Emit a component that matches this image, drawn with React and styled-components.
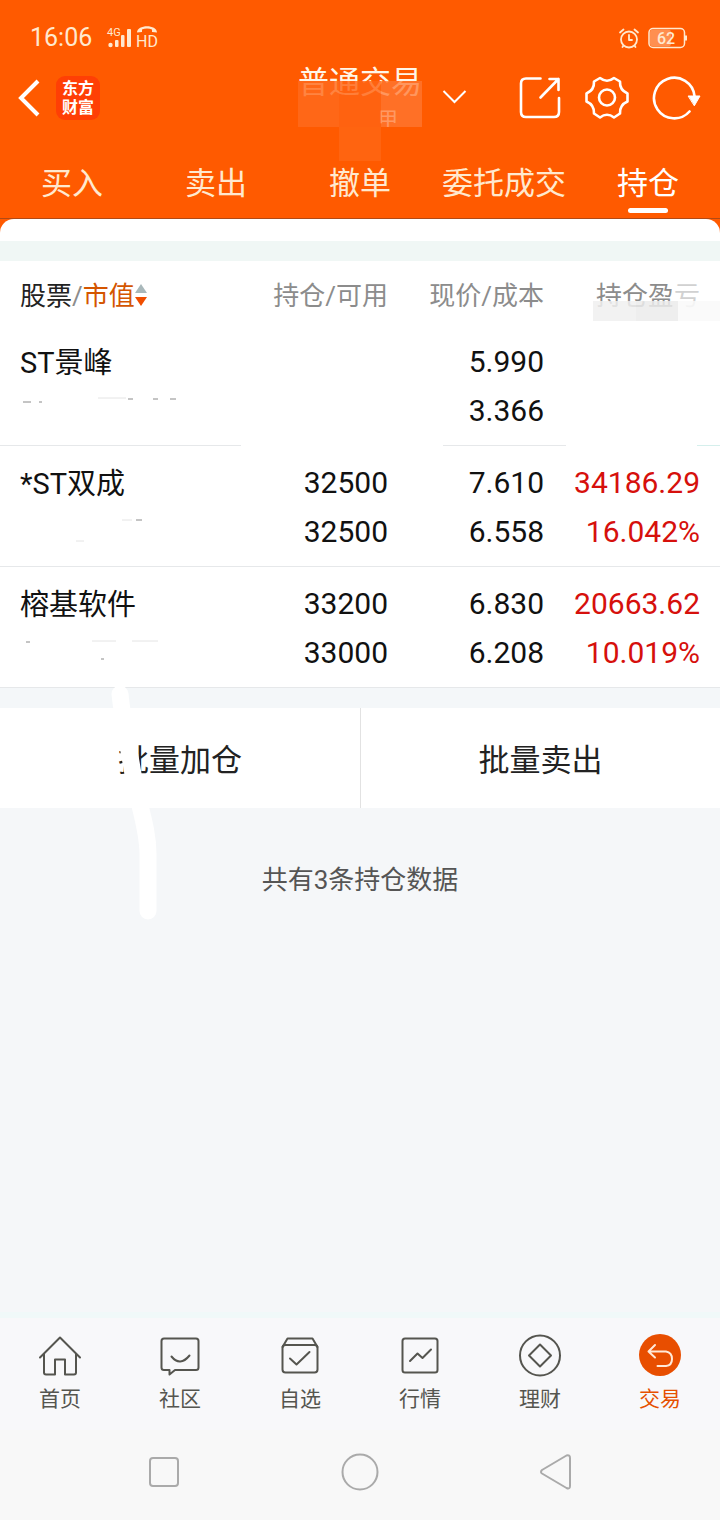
import React from "react";
import styled, { createGlobalStyle } from "styled-components";

const ORANGE = "#ff5a00";
const CREAM = "#ffe9cf";

const GlobalStyle = createGlobalStyle`
  *, *::before, *::after { box-sizing: border-box; }
  body {
    margin: 0;
    background: #f5f7f9;
    font-family: Roboto, "Noto Sans CJK SC", sans-serif;
    color: #111;
  }
  button {
    margin: 0;
    padding: 0;
    border: 0;
    background: none;
    font: inherit;
    color: inherit;
    cursor: pointer;
  }
  svg { display: block; flex: none; }
`;

const Page = styled.div`
  min-height: 100vh;
  display: flex;
  flex-direction: column;
`;

const Header = styled.header`
  background: ${ORANGE};
  color: #fff;
  border-bottom: 1px solid #b04a16;
`;

const StatusBar = styled.div`
  display: flex;
  align-items: center;
  height: 60px;
  padding: 16px 32px 0 30px;
  color: ${CREAM};
`;

const Clock = styled.span`
  font-size: 25px;
  line-height: 30px;
  margin-right: 14px;
`;

const StatusRight = styled.div`
  margin-left: auto;
  display: flex;
  align-items: center;
  gap: 8px;
`;

const TitleBar = styled.div`
  display: grid;
  grid-template-columns: 1fr auto 1fr;
  align-items: center;
  height: 76px;
  padding: 0 18px;
`;

const BarLeft = styled.div`
  display: flex;
  align-items: center;
  gap: 16px;
`;

const Logo = styled.a`
  width: 44px;
  height: 44px;
  padding: 3px 0;
  border-radius: 9px;
  background: #ff3f05;
  color: #fff;
  font-weight: 700;
  font-size: 16px;
  line-height: 19px;
  text-align: center;
  text-decoration: none;
`;

const TitleBlock = styled.div`
  position: relative;
`;

const Title = styled.h1`
  margin: 0;
  font-weight: 400;
  font-size: 31px;
  line-height: 40px;
  color: #fff6e8;
`;

const Account = styled.div`
  margin-top: 4px;
  padding-right: 24px;
  text-align: right;
  font-size: 20px;
  line-height: 26px;
`;

const Mosaic = styled.div`
  position: absolute;
  left: 0;
  right: 0;
  top: 18px;
  display: grid;
  grid-template-columns: repeat(3, 1fr);
`;

const Tile = styled.span`
  height: ${(p) => p.$h}px;
  background: ${(p) => p.$c};
`;

const BarRight = styled.div`
  display: flex;
  align-items: center;
  padding-left: 20px;
`;

const IconButton = styled.button`
  display: flex;
  margin-left: ${(p) => (p.$push ? "auto" : p.$gap || 0)};
`;

const Tabs = styled.nav`
  display: grid;
  grid-template-columns: repeat(5, 1fr);
  height: 82px;
  padding-top: 24px;
`;

const Tab = styled.button`
  display: flex;
  flex-direction: column;
  align-items: center;
  font-size: 31px;
  line-height: 48px;
  white-space: nowrap;
  color: ${(p) => (p.$active ? "#fff" : CREAM)};
  &::after {
    content: "";
    width: 40px;
    height: 5px;
    border-radius: 3px;
    background: ${(p) => (p.$active ? "#fff" : "transparent")};
  }
`;

const SheetTop = styled.div`
  background: ${ORANGE};
  &::before {
    content: "";
    display: block;
    height: 22px;
    border-radius: 14px 14px 0 0;
    background: #fff;
  }
`;

const Strip = styled.div`
  height: 20px;
  background: ${(p) => p.$c};
`;

const Holdings = styled.table`
  width: 100%;
  table-layout: fixed;
  border-collapse: collapse;
  background: #fff;
`;

const Col = styled.col`
  width: ${(p) => p.$w};
`;

const HeadCell = styled.th`
  position: relative;
  height: 64px;
  padding: 5px ${(p) => (p.$last ? 20 : 0)}px 0 ${(p) => (p.$first ? 20 : 0)}px;
  text-align: ${(p) => (p.$first ? "left" : "right")};
  font-weight: 400;
  font-size: 26px;
  line-height: 38px;
  white-space: nowrap;
  color: ${(p) => (p.$first ? "#222" : "#8c8c8c")};
`;

const SortButton = styled.button`
  display: inline-flex;
  align-items: center;
  color: #d45500;
`;

const Slash = styled.span`
  color: #8c8c8c;
`;

const Smear = styled.div`
  position: absolute;
  top: 40px;
  right: 0;
  width: 127px;
  display: grid;
  grid-template-columns: 43px 42px 1fr;
`;

const Fade = styled.span`
  position: absolute;
  top: 14px;
  right: 12px;
  width: 36px;
  height: 36px;
  background: rgba(255, 255, 255, 0.6);
`;

const solid = "linear-gradient(#e6e8ea, #e6e8ea)";
const broken =
  "linear-gradient(to right, #e6e8ea 241px, transparent 241px 443px, #e6e8ea 443px 566px, transparent 566px calc(100% - 23px), #d5efec calc(100% - 23px))";

const Row = styled.tr`
  height: 121px;
  background: ${(p) => (p.$broken ? broken : solid)} bottom / 100% 1px no-repeat;
`;

const Cell = styled.td`
  padding: 12px ${(p) => (p.$last ? 20 : 0)}px 11px ${(p) => (p.$first ? 20 : 0)}px;
  text-align: ${(p) => (p.$first ? "left" : "right")};
  font-size: ${(p) => (p.$first ? 29 : 30)}px;
  line-height: ${(p) => (p.$first ? 53 : 49)}px;
  color: ${(p) => (p.$gain ? "#d6100c" : "#111")};
`;

const Line = styled.div`
  height: 49px;
`;

const Batch = styled.div`
  position: relative;
  display: grid;
  grid-template-columns: 1fr 1fr;
  background: #fff;
`;

const BatchButton = styled.button`
  height: 100px;
  padding-bottom: 2px;
  font-size: 31px;
  color: #222;
  & + & {
    border-left: 1px solid #e2e2e2;
  }
`;

const Stroke = styled.svg`
  position: absolute;
  left: 108px;
  top: -24px;
  pointer-events: none;
`;

const Summary = styled.p`
  margin: 52px 0 0;
  text-align: center;
  font-size: 26px;
  line-height: 40px;
  color: #555;
`;

const BottomNav = styled.nav`
  margin-top: auto;
  display: grid;
  grid-template-columns: repeat(6, 1fr);
  padding: 15px 0 17px;
  border-top: 6px solid #f0f9f9;
  background: #f8f8fa;
`;

const NavItem = styled.a`
  display: flex;
  flex-direction: column;
  align-items: center;
  gap: 8px;
  font-size: 21px;
  line-height: 28px;
  text-decoration: none;
  color: ${(p) => (p.$active ? "#e65000" : "#55554f")};
`;

const SystemBar = styled.div`
  display: grid;
  grid-template-columns: repeat(3, 1fr);
  justify-items: center;
  align-items: center;
  height: 90px;
  padding: 0 66px 6px;
  background: #f8f8f8;
`;

const Icon = ({ size = 44, width = 2, children, ...rest }) => (
  <svg
    width={size}
    height={size}
    viewBox={`0 0 ${size} ${size}`}
    fill="none"
    stroke="currentColor"
    strokeWidth={width}
    strokeLinecap="round"
    strokeLinejoin="round"
    aria-hidden="true"
    {...rest}
  >
    {children}
  </svg>
);

const SignalIcon = () => (
  <svg width="60" height="28" viewBox="0 0 60 28" fill="currentColor" aria-hidden="true">
    <text x="1" y="12" fontSize="11">4G</text>
    <circle cx="4.500" cy="21" r="2.200" />
    <rect x="9" y="16" width="3.500" height="7" rx="1" />
    <rect x="15" y="11" width="3.500" height="12" rx="1" />
    <rect x="21" y="5" width="4" height="18" rx="1" />
    <path d="M31 8.500C31 0 51 0 51 8.500L46 8V5.500C43 4.300 39 4.300 36 5.500V8Z" />
    <text x="30" y="23" fontSize="16">HD</text>
  </svg>
);

const AlarmIcon = () => (
  <Icon size={22} width={1.8}>
    <circle cx="11" cy="12.500" r="8" />
    <path d="M11 8v5h3M2 5.500 5.500 2.500M20 5.500 16.500 2.500M5.500 18.500 4.500 20M16.500 18.500l1 1.500" />
  </Icon>
);

const BatteryIcon = () => (
  <svg width="40" height="22" viewBox="0 0 40 22" role="img" aria-label="62%">
    <rect x="1" y="1.500" width="35.500" height="19" rx="4" fill="none" stroke="currentColor" strokeWidth="1.500" />
    <rect x="2" y="2.500" width="21" height="17" rx="3" fill="#ff8f50" />
    <path d="M38 8.500v5" stroke="currentColor" strokeWidth="2" />
    <text x="18" y="17" fontSize="16" fontWeight="500" textAnchor="middle" fill="currentColor">62</text>
  </svg>
);

const navIcons = {
  home: (
    <Icon>
      <path d="M2 24.500 22 4.500 42 24.500" />
      <path d="M6 21V39.500Q6 41.500 8 41.500H17V26.500H27V41.500H36Q38 41.500 38 39.500V21" />
    </Icon>
  ),
  chat: (
    <Icon>
      <path d="M6 5.500H38Q40.500 5.500 40.500 8V34.500Q40.500 37 38 37H17L11.500 41.500V37H6Q3.500 37 3.500 34.500V8Q3.500 5.500 6 5.500Z" />
      <path d="M13.500 23.500Q22 34 31.500 22.500" />
    </Icon>
  ),
  box: (
    <Icon>
      <rect x="4.500" y="12" width="35" height="27.500" rx="3" />
      <path d="M4.500 14 9.500 5.500H34.500L39.500 14M12 25.500 18.500 31.500 31.500 19" />
    </Icon>
  ),
  chart: (
    <Icon>
      <rect x="4.500" y="5.500" width="35" height="34" rx="2.500" />
      <path d="M12 28 19.500 20.500 24.500 25 33 16.500" />
    </Icon>
  ),
  coin: (
    <Icon>
      <circle cx="22" cy="22.500" r="20" />
      <path d="M22 11.500 33 22.500 22 33.500 11 22.500Z" />
    </Icon>
  ),
  trade: (
    <Icon>
      <circle cx="22" cy="22" r="21" fill="#e84e00" stroke="none" />
      <path d="M17 12 10.500 18.500 17 24.500M10.500 18.500H28Q34 19.500 34 26Q34 32.500 28 33H19.500" stroke="#ffe9d8" />
    </Icon>
  ),
};

const navItems = [
  ["home", "首页"],
  ["chat", "社区"],
  ["box", "自选"],
  ["chart", "行情"],
  ["coin", "理财"],
  ["trade", "交易"],
];

const holdings = [
  {
    name: "ST景峰",
    qty: ["", ""],
    price: ["5.990", "3.366"],
    gain: ["", ""],
    traces: "M3 16h8M19 16h3M108 13h5M133 13h5M150 13h6",
    faint: "M78 12h28",
  },
  {
    name: "*ST双成",
    qty: ["32500", "32500"],
    price: ["7.610", "6.558"],
    gain: ["34186.29", "16.042%"],
    traces: "M116 13h6",
    faint: "M102 13h10M56 34h8",
  },
  {
    name: "榕基软件",
    qty: ["33200", "33000"],
    price: ["6.830", "6.208"],
    gain: ["20663.62", "10.019%"],
    traces: "M6 14h4M81 31h3",
    faint: "M72 13h24M112 13h26",
  },
];

const tabs = ["买入", "卖出", "撤单", "委托成交", "持仓"];

export default function App() {
  return (
    <Page>
      <GlobalStyle />
      <Header>
        <StatusBar>
          <Clock>16:06</Clock>
          <SignalIcon />
          <StatusRight>
            <AlarmIcon />
            <BatteryIcon />
          </StatusRight>
        </StatusBar>
        <TitleBar>
          <BarLeft>
            <IconButton aria-label="返回">
              <svg width="22" height="40" viewBox="0 0 22 40" fill="none" stroke="currentColor" strokeWidth="4">
                <path d="M20 3 3 20 20 37" />
              </svg>
            </IconButton>
            <Logo href="#home">东方<br />财富</Logo>
          </BarLeft>
          <TitleBlock>
            <Title>普通交易</Title>
            <Account>甲</Account>
            <Mosaic>
              <Tile $h={46} $c="rgba(255,106,28,.82)" />
              <Tile $h={46} $c="rgba(255,100,20,.82)" />
              <Tile $h={46} $c="rgba(255,120,50,.76)" />
              <Tile $h={34} $c={ORANGE} />
              <Tile $h={34} $c="#ff6410" />
              <Tile $h={34} $c={ORANGE} />
            </Mosaic>
          </TitleBlock>
          <BarRight>
            <IconButton aria-label="切换账户">
              <svg width="26" height="18" viewBox="0 0 26 18" fill="none" stroke="currentColor" strokeWidth="2">
                <path d="M1.500 2 12.500 13 23.500 2" />
              </svg>
            </IconButton>
            <IconButton $push aria-label="分享">
              <Icon width={2.6}>
                <path d="M22.500 2.500H8Q3 2.500 3 7.500V36Q3 41 8 41H36Q41 41 41 36V22M22.500 21.500 40.500 3M31.500 3H40.500V14" />
              </Icon>
            </IconButton>
            <IconButton $gap="22px" aria-label="设置">
              <Icon size={46} width={2.6}>
                <path d="M16 3Q23 8.500 30 3L36 6.500Q35.500 15 43.500 18.500V26.500Q35.500 30 36 38.500L30 42.500Q23 37 16 42.500L10 38.500Q10.500 30 2.500 26.500V18.500Q10.500 15 10 6.500Z" />
                <circle cx="23" cy="22.500" r="8" />
              </Icon>
            </IconButton>
            <IconButton $gap="22px" aria-label="刷新">
              <Icon size={50} width={2.6}>
                <path d="M37.500 38.500A20.300 20.300 0 1 1 42.500 23" />
                <path d="M36.500 23H48L42.500 32.500Z" fill="currentColor" strokeWidth="1" />
              </Icon>
            </IconButton>
          </BarRight>
        </TitleBar>
        <Tabs>
          {tabs.map((t) => (
            <Tab key={t} $active={t === "持仓"}>{t}</Tab>
          ))}
        </Tabs>
      </Header>
      <SheetTop />
      <Strip $c="#f0f7f5" />
      <Holdings>
        <colgroup>
          <Col $w="auto" />
          <Col $w="154px" />
          <Col $w="156px" />
          <Col $w="176px" />
        </colgroup>
        <thead>
          <tr>
            <HeadCell $first scope="col">
              股票<Slash>/</Slash>
              <SortButton>
                市值
                <svg width="12" height="24" viewBox="0 0 12 24" aria-hidden="true">
                  <path d="M0 9 6 0 12 9Z" fill="#a9b8bb" />
                  <path d="M0 13 6 22 12 13Z" fill="#f04e00" />
                </svg>
              </SortButton>
            </HeadCell>
            <HeadCell scope="col">持仓/可用</HeadCell>
            <HeadCell scope="col">现价/成本</HeadCell>
            <HeadCell $last scope="col">
              持仓盈亏
              <Fade />
              <Smear>
                <Tile $h={20} $c="rgba(240,240,240,.85)" />
                <Tile $h={20} $c="rgba(235,235,235,.85)" />
                <Tile $h={20} $c="rgba(249,249,249,.85)" />
              </Smear>
            </HeadCell>
          </tr>
        </thead>
        <tbody>
          {holdings.map((h, i) => (
            <Row key={h.name} $broken={i === 0}>
              <Cell $first>
                <Line>{h.name}</Line>
                <Line>
                  <svg width="170" height="49" viewBox="0 0 170 49" fill="none" aria-hidden="true">
                    <path d={h.traces} stroke="#8a8a8a" />
                    <path d={h.faint} stroke="#e4e4e4" />
                  </svg>
                </Line>
              </Cell>
              <Cell>
                <Line>{h.qty[0]}</Line>
                <Line>{h.qty[1]}</Line>
              </Cell>
              <Cell>
                <Line>{h.price[0]}</Line>
                <Line>{h.price[1]}</Line>
              </Cell>
              <Cell $last $gain>
                <Line>{h.gain[0]}</Line>
                <Line>{h.gain[1]}</Line>
              </Cell>
            </Row>
          ))}
        </tbody>
      </Holdings>
      <Strip $c="#f4f7f9" />
      <Batch>
        <BatchButton>批量加仓</BatchButton>
        <BatchButton>批量卖出</BatchButton>
        <Stroke width="54" height="240" viewBox="0 0 54 240" fill="none" aria-hidden="true">
          <path d="M12 10C15 40 20 60 24 84C29 118 40 142 40 170V227" stroke="#fff" strokeWidth="17" strokeLinecap="round" />
        </Stroke>
      </Batch>
      <Summary>共有3条持仓数据</Summary>
      <BottomNav>
        {navItems.map(([key, label]) => (
          <NavItem key={key} href={`#${key}`} $active={key === "trade"}>
            {navIcons[key]}
            {label}
          </NavItem>
        ))}
      </BottomNav>
      <SystemBar>
        <IconButton aria-label="最近任务">
          <Icon size={40} color="#aaa">
            <rect x="6" y="6" width="28" height="28" rx="3" />
          </Icon>
        </IconButton>
        <IconButton aria-label="主屏幕">
          <Icon size={40} color="#aaa">
            <circle cx="20" cy="20" r="17.500" />
          </Icon>
        </IconButton>
        <IconButton aria-label="后退">
          <Icon size={40} color="#aaa">
            <path d="M30.500 3.500Q34 2.500 34 6V34Q34 37.500 30.500 36L6 21.500Q4 20 6 18Z" />
          </Icon>
        </IconButton>
      </SystemBar>
    </Page>
  );
}
